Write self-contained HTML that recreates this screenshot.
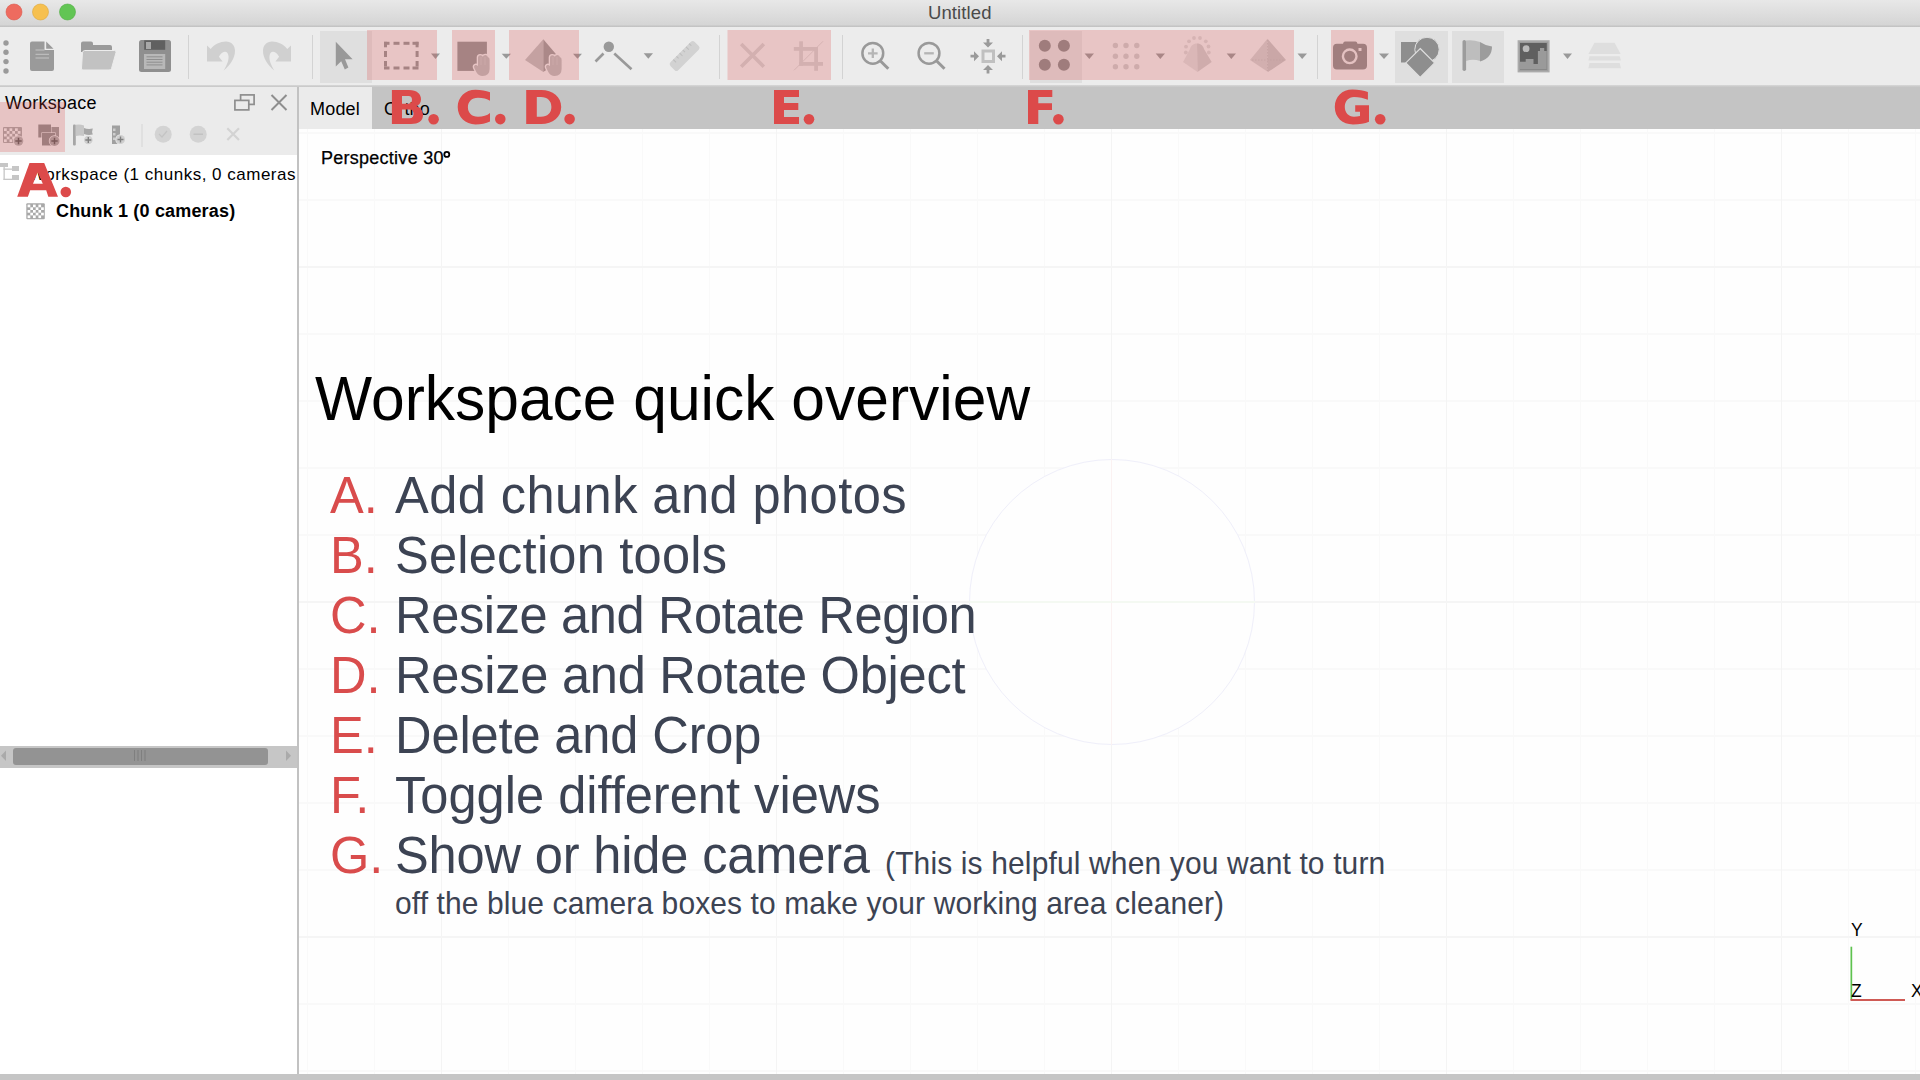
<!DOCTYPE html>
<html><head><meta charset="utf-8">
<style>
*{margin:0;padding:0;box-sizing:border-box}
html,body{width:1920px;height:1080px;overflow:hidden;background:#fefefe;font-family:"Liberation Sans",sans-serif}
.abs{position:absolute}
#titlebar{left:0;top:0;width:1920px;height:26px;background:linear-gradient(#e8e8e8,#d4d4d4)}
#titleline{left:0;top:25px;width:1920px;height:2px;background:linear-gradient(#d0d0d0,#bfbfbf)}
#toolbar{left:0;top:27px;width:1920px;height:59px;background:#ececec}
#toolline{left:0;top:85px;width:1920px;height:2px;background:linear-gradient(#d8d8d8,#c6c6c6)}
#panelhead{left:0;top:87px;width:297px;height:68px;background:#ebebeb}
#splitter{left:297px;top:87px;width:2px;height:987px;background:#c2c2c2}
#tabbar{left:299px;top:87px;width:1621px;height:42px;background:#c4c4c4}
#viewport{left:299px;top:129px;width:1621px;height:945px;background:#fefefe;overflow:hidden}
#bottombar{left:0;top:1074px;width:1920px;height:6px;background:#c5c5c5}
.ui{position:absolute;white-space:nowrap;color:#000;font-size:17px;line-height:1}
.item{position:absolute;left:0;top:0;font-size:50.6px;line-height:1;color:#3c4353;white-space:nowrap;transform-origin:0 0;transform:scaleY(1.026)}
.red{color:#d94c4c}
.sub{position:absolute;font-size:30px;line-height:1;color:#3c4353;white-space:nowrap;transform-origin:0 0;transform:scaleY(1.04)}
</style></head><body>
<div id="titlebar" class="abs"></div>
<div id="titleline" class="abs"></div>
<div class="ui" style="left:928px;top:3.5px;color:#4a4a4a;font-size:18.5px;letter-spacing:0.1px">Untitled</div>
<div id="toolbar" class="abs"></div>
<div id="toolline" class="abs"></div>
<div id="panelhead" class="abs"></div>
<div id="splitter" class="abs"></div>
<div id="tabbar" class="abs"></div>
<div class="abs" style="left:299px;top:87px;width:73px;height:42px;background:#ebebeb"></div>
<div class="ui" style="left:310px;top:99.5px;font-size:18px;letter-spacing:0.2px">Model</div>
<div class="ui" style="left:384px;top:99.5px;font-size:18px;letter-spacing:0.2px">Ortho</div>
<div id="viewport" class="abs">
 <div class="abs" style="left:0;top:0;width:1621px;height:945px;background-image:linear-gradient(90deg,#f9f9f9 1px,transparent 1px);background-size:67px 945px;background-position:8px 0"></div>
 <div class="abs" style="left:0;top:0;width:1621px;height:945px;background-image:linear-gradient(180deg,#f9f9f9 2px,transparent 2px);background-size:1621px 67px;background-position:0 3px"></div>
 <div class="abs" style="left:0;top:0;width:1621px;height:945px;background-image:linear-gradient(90deg,#f4f4f4 1.5px,transparent 1.5px);background-size:335px 945px;background-position:142px 0"></div>
 <div class="abs" style="left:0;top:0;width:1621px;height:945px;background-image:linear-gradient(180deg,#f5f5f5 2px,transparent 2px);background-size:1621px 335px;background-position:0 137px"></div>
 <div class="abs" style="left:670px;top:330px;width:286px;height:286px;border-radius:50%;border:1.2px solid #efeffa;background:#fefefe"></div>
 <div class="abs" style="left:812px;top:330px;width:1.2px;height:286px;background:#fbf2f2"></div>
 <div class="abs" style="left:670px;top:472px;width:286px;height:1.5px;background:#f4f9f2"></div>
</div>
<div id="bottombar" class="abs"></div>

<div class="ui" style="left:5px;top:93.8px;font-size:18px;letter-spacing:0.24px">Workspace</div>
<div class="abs" style="left:0;top:155px;width:297px;height:919px;background:#fff"></div>
<div class="ui" style="left:29px;top:166px;letter-spacing:0.5px;width:268px;overflow:hidden">Workspace (1 chunks, 0 cameras</div>
<div class="ui" style="left:56px;top:201.5px;font-size:18px;font-weight:bold;letter-spacing:0.17px">Chunk 1 (0 cameras)</div>
<div class="abs" style="left:0;top:746px;width:297px;height:22px;background:#c6c6c6"></div>
<div class="abs" style="left:13px;top:748px;width:255px;height:17px;background:#939393;border-radius:3px"></div>

<div class="ui" style="left:321px;top:149px;font-size:18px;letter-spacing:0.26px;-webkit-text-stroke:0.25px #000">Perspective 30</div>

<div class="abs" style="left:315px;top:367.4px;font-size:60.5px;line-height:1;color:#000;white-space:nowrap;transform-origin:0 0;transform:scaleY(1.03)">Workspace quick overview</div>
<div class="abs" style="left:330px;top:469.6px"><div class="item red">A.</div><div class="item" style="left:65px;letter-spacing:0.42px">Add chunk and photos</div></div>
<div class="abs" style="left:330px;top:529.6px"><div class="item red">B.</div><div class="item" style="left:65px;letter-spacing:0.21px">Selection tools</div></div>
<div class="abs" style="left:330px;top:589.6px"><div class="item red">C.</div><div class="item" style="left:65px;letter-spacing:-0.39px">Resize and Rotate Region</div></div>
<div class="abs" style="left:330px;top:649.6px"><div class="item red">D.</div><div class="item" style="left:65px;letter-spacing:-0.26px">Resize and Rotate Object</div></div>
<div class="abs" style="left:330px;top:709.6px"><div class="item red">E.</div><div class="item" style="left:65px;letter-spacing:-0.14px">Delete and Crop</div></div>
<div class="abs" style="left:330px;top:769.6px"><div class="item red">F.</div><div class="item" style="left:65px">Toggle different views</div></div>
<div class="abs" style="left:330px;top:829.6px"><div class="item red">G.</div><div class="item" style="left:65px;letter-spacing:-0.17px">Show or hide camera</div></div>
<div class="sub" style="left:885px;top:848px;letter-spacing:0.135px">(This is helpful when you want to turn</div>
<div class="sub" style="left:395px;top:888px;letter-spacing:0.1px">off the blue camera boxes to make your working area cleaner)</div>
<svg class="abs" style="left:0;top:0" width="1920" height="1080" viewBox="0 0 1920 1080">
<!-- traffic lights -->
<circle cx="14" cy="12" r="8" fill="#ee6b5f" stroke="#dc5a4f" stroke-width="0.6"/>
<circle cx="40.5" cy="12" r="8" fill="#f6c04f" stroke="#dea83c" stroke-width="0.6"/>
<circle cx="67.5" cy="12" r="8" fill="#62c554" stroke="#52ad45" stroke-width="0.6"/>
<!-- separators -->
<g fill="#d3d3d3">
<rect x="188" y="35" width="1" height="44"/><rect x="312" y="35" width="1" height="44"/>
<rect x="719" y="35" width="1" height="44"/><rect x="842" y="35" width="1" height="44"/>
<rect x="1022" y="35" width="1" height="44"/><rect x="1317" y="35" width="1" height="44"/>
</g>
<!-- active buttons -->
<g fill="#dfdfdf">
<rect x="320" y="31" width="52" height="52"/>
<rect x="1030" y="31" width="52" height="52"/>
<rect x="1395" y="31" width="53" height="52"/>
<rect x="1452" y="31" width="52" height="52"/>
</g>
<!-- drag dots -->
<g fill="#9a9a9a"><circle cx="6" cy="43" r="2.7"/><circle cx="6" cy="52.3" r="2.7"/><circle cx="6" cy="61.6" r="2.7"/><circle cx="6" cy="71" r="2.7"/></g>
<!-- new doc -->
<path d="M32,41.5 H44.5 V50 H54 V69 Q54,71 52,71 H32 Q30,71 30,69 V43.5 Q30,41.5 32,41.5 Z" fill="#9a9a9a"/>
<path d="M46.2,41.5 L53.5,48.8 H46.2 Z" fill="#9a9a9a"/>
<g fill="#c4c4c4"><rect x="35.5" y="49.5" width="9" height="1"/><rect x="35.5" y="53.8" width="13.5" height="1"/><rect x="35.5" y="57.5" width="13.5" height="1"/></g>
<!-- folder -->
<path d="M83,41.5 H91 Q93,41.5 93,43.5 V45 H110 Q112,45 112,47 V52 H81 V43.5 Q81,41.5 83,41.5 Z" fill="#9a9a9a"/>
<path d="M84.5,50.5 H114.5 Q116.5,50.5 116,52.5 L111.5,68.5 Q111,70 109,70 H83 Q81,70 81.5,68 L82.5,52.5 Q83,50.5 84.5,50.5 Z" fill="#c2c2c2" stroke="#ececec" stroke-width="1"/>
<!-- save -->
<rect x="139" y="40" width="32" height="32" rx="2.5" fill="#8f8f8f"/>
<rect x="144.2" y="40.3" width="21" height="9.5" fill="#606060"/>
<rect x="146" y="42" width="5" height="7" fill="#a8a8a8"/>
<rect x="144" y="54" width="21.2" height="15" fill="#b8b8b8"/>
<g fill="#8f8f8f"><rect x="146.5" y="56.3" width="16" height="1"/><rect x="146.5" y="59" width="16" height="1"/><rect x="146.5" y="61.7" width="16" height="1"/><rect x="146.5" y="64.4" width="16" height="1"/></g>
<!-- undo / redo -->
<path id="undo" d="M207,45.4 L210.7,49 C214.5,44.5 220,41.6 226,41.6 C231.5,41.6 235,45.5 235,51 C235,58 230,65.5 223.7,70.6 C227,65 229,60 228.5,56 C228,52.5 226.5,51.5 224.5,51.8 C222.5,52.2 220.5,54 218.9,56.7 L222.6,61.6 H207 Z" fill="#d0d0d0"/>
<use href="#undo" transform="translate(498,0) scale(-1,1)"/>
<!-- pointer -->
<path d="M335.8,41.8 L352.6,59.3 L345,59.3 L348.4,67.4 L344.8,69.5 L341.2,61.3 L335.8,66.5 Z" fill="#999"/>
<!-- dashed rect -->
<g fill="#969696">
<rect x="384" y="41.8" width="5.5" height="3"/><rect x="384" y="41.8" width="3" height="5.5"/>
<rect x="393.5" y="41.8" width="6" height="3"/><rect x="403.5" y="41.8" width="6" height="3"/>
<rect x="412.5" y="41.8" width="6" height="3"/><rect x="415.6" y="41.8" width="3" height="5.5"/>
<rect x="384" y="51" width="3" height="6"/><rect x="415.6" y="51" width="3" height="6"/>
<rect x="384" y="61" width="3" height="5.5"/><rect x="415.6" y="61" width="3" height="5.5"/>
<rect x="384" y="66.5" width="5.5" height="3"/><rect x="393.5" y="66.5" width="6" height="3"/>
<rect x="403.5" y="66.5" width="6" height="3"/><rect x="412.5" y="66.5" width="6" height="3"/>
</g>
<!-- dropdown triangles -->
<g fill="#999">
<path d="M431,53.5 H440 L435.5,59 Z"/><path d="M501.7,53.7 H511 L506.3,58.8 Z"/><path d="M573,53.7 H582 L577.5,58.8 Z"/>
<path d="M643.7,53.3 H653 L648.3,58.8 Z"/><path d="M1084.6,53.5 H1094 L1089.3,59 Z"/><path d="M1155.7,53.5 H1165 L1160.3,59 Z"/>
<path d="M1226.7,53.5 H1236 L1231.3,59 Z"/><path d="M1297.5,53.5 H1307 L1302.2,59 Z"/><path d="M1379,53.5 H1389 L1384,59 Z"/>
<path d="M1563,53.5 H1572 L1567.5,59 Z"/>
</g>
<!-- C: square + hand -->
<rect x="457.4" y="41.7" width="29.5" height="29.2" fill="#969696"/>
<path id="hand" d="M478,57.5 Q478,55.3 480.3,55.3 Q482.3,55.3 482.8,56.8 Q483.3,55 485.5,55 Q487.7,55.2 487.9,57.3 Q489.6,57.3 489.6,59.5 V69 Q489.6,76 482.5,76 Q478.5,76 476.3,72 L474.2,67.8 Q473.4,65.6 475.3,65 Q476.9,64.6 478,66.2 Z" fill="#bbbbbb" stroke="#ececec" stroke-width="2.6" paint-order="stroke"/>
<g fill="#c8c8c8"><rect x="480.6" y="57" width="0.9" height="8"/><rect x="484.6" y="57" width="0.9" height="8"/></g>
<!-- D: pyramid + hand -->
<path d="M543.3,39.2 L525,60 L543.3,72 Z" fill="#bdbdbd"/>
<path d="M543.3,39.2 L561,60 L543.3,72 Z" fill="#9c9c9c"/>
<use href="#hand" x="72" y="0"/>
<g fill="#c8c8c8"><rect x="552.6" y="57" width="0.9" height="8"/><rect x="556.6" y="57" width="0.9" height="8"/></g>
<!-- angle -->
<circle cx="608.8" cy="46.8" r="5.2" fill="#999"/>
<path d="M595.5,61.5 L603.5,53.5 M614.3,53.5 L631.5,69.3" stroke="#999" stroke-width="2.6" fill="none"/>
<!-- ruler -->
<g transform="translate(684.6,56) rotate(-45)">
<rect x="-17" y="-5.5" width="34" height="11" rx="2.5" fill="#d2d2d2"/>
<g fill="#bdbdbd"><rect x="-11" y="-5.5" width="1" height="4"/><rect x="-6.5" y="-5.5" width="1" height="3"/><rect x="-2" y="-5.5" width="1" height="4"/><rect x="2.5" y="-5.5" width="1" height="3"/><rect x="7" y="-5.5" width="1" height="4"/><rect x="11.5" y="-5.5" width="1" height="3"/></g>
</g>
<!-- delete X -->
<path d="M741.2,44.1 L763.8,66.7 M763.8,44.1 L741.2,66.7" stroke="#d0d0d0" stroke-width="3.6" fill="none"/>
<!-- crop -->
<g fill="#d0d0d0">
<rect x="799.2" y="41.3" width="3.7" height="24.5"/><rect x="793.8" y="47" width="23.7" height="3.8"/>
<rect x="814.2" y="47" width="3.8" height="23.8"/><rect x="799.2" y="62" width="23.8" height="3.8"/>
</g>
<path d="M794,70.3 L823,41.3" stroke="#d0d0d0" stroke-width="0.9"/>
<!-- zoom in / out -->
<g stroke="#999" fill="none" stroke-width="2.5">
<circle cx="872.8" cy="53.3" r="10.4"/><path d="M880.5,61 L888.3,68.8" stroke-width="3"/>
<circle cx="929" cy="53.3" r="10.4"/><path d="M936.7,61 L944.5,68.8" stroke-width="3"/>
</g>
<g stroke="#b5b5b5" stroke-width="2.3"><path d="M868,53.3 H877.6 M872.8,48.5 V58.1"/><path d="M924.2,53.3 H933.8"/></g>
<!-- fit -->
<rect x="983" y="51" width="10.5" height="10.5" fill="none" stroke="#c0c0c0" stroke-width="3"/>
<g fill="#9a9a9a">
<path d="M986.6,39 H989.4 V42.5 H993 L988,47.5 L983,42.5 H986.6 Z"/>
<path d="M986.6,73.5 H989.4 V70 H993 L988,65 L983,70 H986.6 Z"/>
<path d="M970.5,54.8 V57.6 H974 V61.2 L979,56.2 L974,51.2 V54.8 Z"/>
<path d="M1005.5,54.8 V57.6 H1002 V61.2 L997,56.2 L1002,51.2 V54.8 Z"/>
</g>
<!-- F icons: 4 dots -->
<g fill="#8c8c8c"><circle cx="1044.8" cy="45.8" r="6"/><circle cx="1063.9" cy="45.8" r="6"/><circle cx="1044.8" cy="64.8" r="6"/><circle cx="1063.9" cy="64.8" r="6"/></g>
<!-- 9 dots -->
<g fill="#cacaca"><circle cx="1115.4" cy="45.5" r="2.7"/><circle cx="1126" cy="45.5" r="2.7"/><circle cx="1136.8" cy="45.5" r="2.7"/>
<circle cx="1115.4" cy="56.3" r="2.7"/><circle cx="1126" cy="56.3" r="2.7"/><circle cx="1136.8" cy="56.3" r="2.7"/>
<circle cx="1115.4" cy="66.8" r="2.7"/><circle cx="1126" cy="66.8" r="2.7"/><circle cx="1136.8" cy="66.8" r="2.7"/></g>
<!-- dense cloud pyramid -->
<g fill="#d4d4d4">
<circle cx="1185.8" cy="52.5" r="1.9"/><circle cx="1186" cy="46.7" r="1.9"/><circle cx="1189" cy="41.3" r="1.9"/><circle cx="1194" cy="38" r="1.9"/><circle cx="1200" cy="38" r="1.9"/>
<circle cx="1205.8" cy="41.3" r="1.9"/><circle cx="1208.5" cy="46.5" r="1.9"/><circle cx="1208.8" cy="52.5" r="1.9"/>
</g>
<path d="M1197,43.5 C1194,43.5 1191,45 1190,49 L1183,62 L1197.5,72 Z" fill="#dadada"/><path d="M1197,43.5 C1200,43.5 1203,45 1204,49 L1211.7,62 L1197.5,72 Z" fill="#cbcbcb"/>
<!-- mesh pyramid -->
<path d="M1267.5,38.8 L1250,60 L1268,72 Z" fill="#cfcfcf"/><path d="M1267.5,38.8 L1286,60 L1268,72 Z" fill="#c4c4c4"/>
<path d="M1267.5,40 V71 M1252,60 L1284,60" stroke="#bcbcbc" stroke-width="0.8" stroke-dasharray="1.5 1.5"/>
<!-- camera -->
<path d="M1345,41.5 H1355.5 Q1357,41.5 1357.5,43.8 H1363 Q1367,43.8 1367,47.8 V65.6 Q1367,69.6 1363,69.6 H1337 Q1333,69.6 1333,65.6 V47.8 Q1333,43.8 1337,43.8 H1343 Q1343.5,41.5 1345,41.5 Z" fill="#8f8f8f"/>
<circle cx="1349.7" cy="56.3" r="6.8" fill="none" stroke="#e6e6e6" stroke-width="2.4"/>
<rect x="1358.5" y="48" width="3" height="3" fill="#e6e6e6"/>
<!-- shapes -->
<path d="M1401,42 H1416.5 V62.5 H1401 Z" fill="#8e8e8e"/>
<circle cx="1427" cy="49.5" r="12.2" fill="#8e8e8e" stroke="#dfdfdf" stroke-width="1"/>
<path d="M1420.2,48.5 L1434.6,62.9 L1420.2,77.3 L1405.8,62.9 Z" fill="#8e8e8e" stroke="#dfdfdf" stroke-width="1.2"/>
<!-- flag -->
<rect x="1462.5" y="40" width="3.6" height="31" rx="1.8" fill="#9c9c9c"/>
<path d="M1466,40.5 Q1473,39.5 1480,42 V61 Q1473,58.5 1466,61 Z" fill="#bdbdbd"/>
<path d="M1480,42 Q1486,46 1492,46.5 Q1492,58 1480,61.5 Z" fill="#9c9c9c"/>
<!-- image icon -->
<rect x="1517.6" y="40.2" width="32" height="32.2" fill="#ababab"/>
<rect x="1519.2" y="41.8" width="28.8" height="29" fill="#9c9c9c"/>
<rect x="1520" y="43" width="26.8" height="26.6" fill="#5f5f5f"/>
<circle cx="1526.1" cy="48.7" r="3.4" fill="#bababa"/>
<path d="M1520,61.7 H1525.7 V58.9 H1533.5 V63.9 H1537.9 V51.1 H1540 V47.9 H1544.2 V51.1 H1546.8 V69.6 H1520 Z" fill="#9a9a9a"/>
<!-- layers -->
<g fill="#dedede">
<path d="M1594.5,42.7 H1614.5 L1620.7,54 H1588.4 Z"/>
<path d="M1589.5,56.2 H1619.7 L1621,60.5 H1588.4 Z"/>
<path d="M1589.5,63 H1619.7 L1621,68.2 H1588.4 Z"/>
</g>
<!-- panel header icons -->
<g fill="none" stroke="#8e8e8e" stroke-width="1.7">
<rect x="240.6" y="94.9" width="13.5" height="9.5"/>
<rect x="234.9" y="100.4" width="13.9" height="9.5" fill="#ebebeb"/>
<path d="M271.5,95 L286.5,110 M286.5,95 L271.5,110" stroke-width="2"/>
</g>
<!-- panel toolbar icons -->
<rect x="141.5" y="124" width="1" height="23" fill="#d6d6d6"/>
<circle cx="163.2" cy="134.2" r="8.5" fill="#d3d3d3"/><path d="M159,134 L162,137 L167,131" stroke="#c4c4c4" stroke-width="1.2" fill="none"/>
<circle cx="198.2" cy="134.2" r="8.5" fill="#d3d3d3"/><rect x="193.5" y="133.5" width="9.5" height="1.5" fill="#c2c2c2"/>
<path d="M227.3,128.3 L239,140 M239,128.3 L227.3,140" stroke="#d3d3d3" stroke-width="2.2" fill="none"/>
<!-- add chunk (checker + plus) -->
<g>
<rect x="3" y="127" width="19" height="16" rx="1" fill="#a8a8a8"/>
<g fill="#ececec"><rect x="4.00" y="128.30" width="2.75" height="2.75"/><rect x="9.50" y="128.30" width="2.75" height="2.75"/><rect x="15.00" y="128.30" width="2.75" height="2.75"/><rect x="6.75" y="131.05" width="2.75" height="2.75"/><rect x="12.25" y="131.05" width="2.75" height="2.75"/><rect x="17.75" y="131.05" width="2.75" height="2.75"/><rect x="4.00" y="133.80" width="2.75" height="2.75"/><rect x="9.50" y="133.80" width="2.75" height="2.75"/><rect x="15.00" y="133.80" width="2.75" height="2.75"/><rect x="6.75" y="136.55" width="2.75" height="2.75"/><rect x="12.25" y="136.55" width="2.75" height="2.75"/><rect x="17.75" y="136.55" width="2.75" height="2.75"/><rect x="4.00" y="139.30" width="2.75" height="2.75"/><rect x="9.50" y="139.30" width="2.75" height="2.75"/><rect x="15.00" y="139.30" width="2.75" height="2.75"/></g>
<circle cx="18.5" cy="141" r="4.8" fill="#b0b0b0" stroke="#ececec" stroke-width="1.4" paint-order="stroke"/><path d="M15.3,141 H21.7 M18.5,137.8 V144.2" stroke="#5e5e5e" stroke-width="1.5"/>
</g>
<!-- add photos -->
<rect x="38.3" y="124.5" width="12.7" height="13" fill="#8f8f8f"/>
<rect x="51.5" y="127" width="7.5" height="13" fill="#9a9a9a"/>
<rect x="42" y="133" width="13" height="12.5" fill="#8f8f8f" stroke="#ececec" stroke-width="1.2" paint-order="stroke"/>
<circle cx="54.5" cy="141" r="5" fill="#a8a8a8" stroke="#ececec" stroke-width="1.4" paint-order="stroke"/><path d="M51.3,141 H57.7 M54.5,137.8 V144.2" stroke="#5e5e5e" stroke-width="1.5"/>
<!-- add marker -->
<rect x="73" y="124.5" width="2.8" height="21" rx="1" fill="#a6a6a6"/>
<path d="M75.8,124.8 Q80,124 84,125.5 V136 Q80,135 75.8,136 Z" fill="#c6c6c6"/>
<path d="M84,128 Q88,129.5 92.8,128.5 Q91.5,131.5 92.8,134.5 Q88,135.5 84,134 Z" fill="#a6a6a6"/>
<circle cx="88.3" cy="140" r="4.3" fill="#cfcfcf" stroke="#ececec" stroke-width="1.2" paint-order="stroke"/><path d="M85.3,140 H91.3 M88.3,137 V143" stroke="#808080" stroke-width="1.4"/>
<!-- add scale bar -->
<rect x="112" y="125.5" width="8" height="18.5" fill="#a0a0a0"/>
<g fill="#ececec" fill-opacity="0.6"><rect x="113" y="128.5" width="2.5" height="2.5"/><rect x="113" y="133" width="2.5" height="2.5"/><rect x="113" y="137.5" width="2.5" height="2.5"/></g>
<circle cx="120.5" cy="139.5" r="4.5" fill="#cfcfcf" stroke="#ececec" stroke-width="1.4" paint-order="stroke"/><path d="M117.5,139.5 H123.5 M120.5,136.5 V142.5" stroke="#808080" stroke-width="1.4"/>
<!-- tree icons -->
<g fill="#c6c6c6">
<rect x="0" y="163" width="8" height="4"/><rect x="12" y="166" width="7" height="5"/><rect x="12" y="175" width="7" height="5"/>
<rect x="3.5" y="166" width="1.3" height="14"/><rect x="3.5" y="168.5" width="9" height="1.3"/><rect x="3.5" y="178.7" width="9" height="1.3"/>
</g>
<rect x="26.3" y="203.3" width="18.5" height="16" rx="1" fill="#a8a8a8"/>
<g fill="#fff"><rect x="27.60" y="204.60" width="2.70" height="2.70"/><rect x="33.00" y="204.60" width="2.70" height="2.70"/><rect x="38.40" y="204.60" width="2.70" height="2.70"/><rect x="30.30" y="207.30" width="2.70" height="2.70"/><rect x="35.70" y="207.30" width="2.70" height="2.70"/><rect x="41.10" y="207.30" width="2.70" height="2.70"/><rect x="27.60" y="210.00" width="2.70" height="2.70"/><rect x="33.00" y="210.00" width="2.70" height="2.70"/><rect x="38.40" y="210.00" width="2.70" height="2.70"/><rect x="30.30" y="212.70" width="2.70" height="2.70"/><rect x="35.70" y="212.70" width="2.70" height="2.70"/><rect x="41.10" y="212.70" width="2.70" height="2.70"/><rect x="27.60" y="215.40" width="2.70" height="2.70"/><rect x="33.00" y="215.40" width="2.70" height="2.70"/><rect x="38.40" y="215.40" width="2.70" height="2.70"/></g>
<!-- scrollbar details -->
<g fill="#7f7f7f"><rect x="134" y="750" width="1" height="11"/><rect x="137.5" y="750" width="1" height="11"/><rect x="141" y="750" width="1" height="11"/><rect x="144.5" y="750" width="1" height="11"/></g>
<path d="M6,750.5 V761 L1,755.7 Z" fill="#aaa"/><path d="M286,750.5 V761 L291,755.7 Z" fill="#aaa"/>
<!-- axis gizmo -->
<rect x="1850.5" y="946.7" width="1.7" height="53" fill="#5ec24f"/>
<rect x="1850.5" y="999" width="54.5" height="2" fill="#cf5a55"/>
<circle cx="446.8" cy="154.4" r="2.5" fill="none" stroke="#000" stroke-width="1.8"/>
<!-- pink overlays -->
<g fill="#dc4a4a" fill-opacity="0.235">
<rect x="0" y="102" width="65" height="50"/>
<rect x="367" y="30" width="70" height="50"/>
<rect x="452" y="30" width="43" height="50"/>
<rect x="509" y="30" width="70" height="50"/>
<rect x="727.5" y="30" width="103.5" height="50"/>
<rect x="1029" y="30" width="265" height="50"/>
<rect x="1331" y="30" width="43" height="50"/>
</g>
<!-- annotation labels -->
<g fill="#dc4a4a" fill-rule="evenodd">
<path d="M17.2,196.8 L29.5,163.1 H44.2 L58,196.8 H48.3 L46.2,190.3 H30.2 L27.9,196.8 Z M33,183.8 L37.7,172.3 L42.8,183.8 Z"/>
<path d="M391.9,90 H409 C417,90 421,94 421,99.5 C421,103 419,105 416.5,106 C420.5,107.5 423,110.5 423,115 C423,121 418.5,124 411,124 H391.9 Z M402,96 H408.5 C411,96 412,97.6 412,99.8 C412,102 411,103.7 408.5,103.7 H402 Z M402,109.6 H409.5 C412.5,109.6 413.5,111.5 413.5,114 C413.5,116.5 412.5,118.3 409.5,118.3 H402 Z"/>
<path d="M490,92.3 C486,90.5 481,89.7 475.5,89.7 C465,89.7 457.7,97.5 457.7,107 C457.7,117 465.5,124.4 475.5,124.4 C481,124.4 486,123.5 490,121.5 V113 C487,115.5 483,116.7 478,116.7 C471.5,116.7 467.9,112.5 467.9,107.2 C467.9,102 471.5,97.8 478,97.8 C483,97.8 487,99 490,100.7 Z"/>
<path d="M526.2,90.1 H541 C553,90.1 561.2,97 561.2,107 C561.2,117 553,124 541,124 H526.2 Z M536.8,97 H541 C547.5,97 551.4,101 551.4,106.9 C551.4,112.7 547.5,116.7 541,116.7 H536.8 Z"/>
<path d="M774,90 H799 V97 H784 V103 H798.3 V110 H784 V116.9 H799 V124 H774 Z"/>
<path d="M1028,90 H1052.3 V97 H1038.3 V103.3 H1052 V110 H1038.3 V124 H1028 Z"/>
<path d="M1367.9,92 C1364,90.5 1358.5,89.6 1352.5,89.6 C1342,89.6 1334.8,97 1334.8,107 C1334.8,117.5 1342.5,124.4 1353,124.4 C1359.5,124.4 1365,123.5 1369,121.7 V105.2 H1355.2 V111.7 H1360 V116 C1358,116.5 1356,116.7 1354,116.7 C1348.5,116.7 1344.8,112.5 1344.8,107 C1344.8,101.3 1348.5,97.1 1354,97.1 C1359,97.1 1364,98.4 1367.9,99.8 Z"/>
<circle cx="65.8" cy="192" r="5.3"/><circle cx="433.6" cy="119.2" r="5.3"/><circle cx="500.3" cy="119.1" r="5.3"/>
<circle cx="569.6" cy="119.1" r="5.3"/><circle cx="809" cy="119.2" r="5.3"/><circle cx="1058.4" cy="119.2" r="5.3"/><circle cx="1380.2" cy="119.2" r="5.3"/>
</g>
</svg>
<div class="ui" style="left:1851px;top:922px;font-size:17.5px">Y</div>
<div class="ui" style="left:1851px;top:982.5px;font-size:17.5px">Z</div>
<div class="ui" style="left:1911px;top:982.5px;font-size:17.5px">X</div>
</body></html>
